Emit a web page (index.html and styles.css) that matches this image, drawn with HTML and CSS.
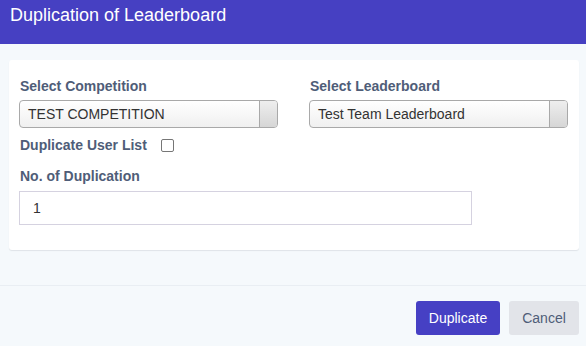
FILE: index.html
```html
<!DOCTYPE html>
<html>
<head>
<meta charset="utf-8">
<link rel="stylesheet" href="styles.css">
</head>
<body>
<div class="modal">
  <div class="modal-header">
    <h1 class="modal-title">Duplication of Leaderboard</h1>
  </div>
  <div class="modal-body">
    <div class="card">
      <div class="row">
        <div class="field">
          <label class="label">Select Competition</label>
          <div class="select"><span class="select-text">TEST COMPETITION</span><span class="select-btn"></span></div>
        </div>
        <div class="field">
          <label class="label">Select Leaderboard</label>
          <div class="select"><span class="select-text">Test Team Leaderboard</span><span class="select-btn"></span></div>
        </div>
      </div>
      <div class="check-row">
        <span class="label">Duplicate User List</span>
        <span class="checkbox"></span>
      </div>
      <label class="label num-label">No. of Duplication</label>
      <div class="input">1</div>
    </div>
  </div>
  <div class="modal-footer">
    <button class="btn btn-primary">Duplicate</button>
    <button class="btn btn-secondary">Cancel</button>
  </div>
</div>
</body>
</html>
```
FILE: styles.css
```css
* { box-sizing: border-box; }
html, body { margin: 0; padding: 0; }
body {
  width: 586px;
  height: 346px;
  overflow: hidden;
  background: #f5f9fc;
  font-family: "Liberation Sans", Arial, sans-serif;
}
.modal { display: flex; flex-direction: column; }
.modal-header {
  height: 44px;
  background: #4640c2;
  padding: 4px 10px 0;
}
.modal-title {
  margin: 0;
  color: #ffffff;
  font-size: 18px;
  font-weight: normal;
  line-height: 22px;
}
.modal-body {
  padding: 16px 7px 0 9px;
  height: 242px;
  border-bottom: 1px solid #e9eef3;
}
.card {
  width: 570px;
  height: 190px;
  background: #ffffff;
  border-radius: 3px;
  box-shadow: 0 1px 1px #dfe3e8;
  padding: 18px 10px 0 10px;
}
.row {
  display: grid;
  grid-template-columns: 259px 259px;
  column-gap: 31px;
}
.field { display: flex; flex-direction: column; }
.label {
  display: block;
  color: #4f5d78;
  font-weight: bold;
  font-size: 14px;
  line-height: 16px;
  margin-left: 1px;
}
.select {
  margin-top: 6px;
  height: 28px;
  border: 1px solid #a9a9a9;
  border-radius: 4px;
  background: linear-gradient(#ffffff, #f0f0f0);
  display: flex;
  overflow: hidden;
}
.select-text {
  flex: 1;
  padding-left: 8px;
  font-size: 14px;
  line-height: 26px;
  color: #333333;
}
.select-btn {
  width: 18px;
  border-left: 1px solid #a9a9a9;
  background: linear-gradient(#eeeeee, #d6d6d6);
}
.check-row {
  display: flex;
  align-items: center;
  gap: 14px;
  margin-top: 9px;
}
.checkbox {
  width: 13px;
  height: 13px;
  border: 1px solid #767676;
  border-radius: 2px;
  background: #fff;
}
.num-label { margin-top: 15px; }
.input {
  margin-top: 7px;
  width: 453px;
  height: 34px;
  border: 1px solid #d5d2e0;
  padding-left: 13px;
  font-size: 14px;
  line-height: 32px;
  color: #333333;
}
.modal-footer {
  display: flex;
  justify-content: flex-end;
  gap: 9px;
  padding: 15px 7px 0 0;
}
.btn {
  height: 34px;
  border: none;
  border-radius: 3px;
  font-family: "Liberation Sans", Arial, sans-serif;
  font-size: 14px;
  padding: 0;
}
.btn-primary {
  width: 84px;
  background: #4640c4;
  color: #ffffff;
}
.btn-secondary {
  width: 70px;
  background: #e2e4e9;
  color: #4f5d78;
}
```
